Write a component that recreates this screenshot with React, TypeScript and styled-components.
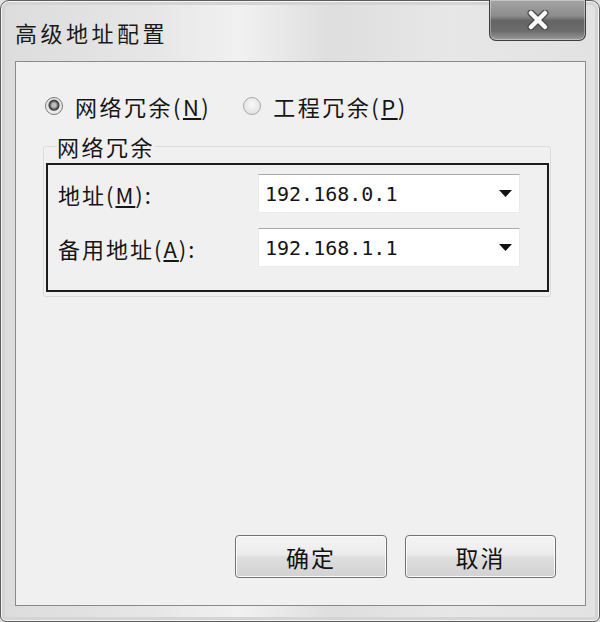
import React from "react";
import styled, { createGlobalStyle } from "styled-components";

const GlobalStyle = createGlobalStyle`
  html, body {
    margin: 0;
    padding: 0;
    background: #e2e2e2;
  }
  body {
    font-family: "Noto Sans CJK SC", "Noto Sans", sans-serif;
    color: #161616;
  }
`;

const Window = styled.div`
  box-sizing: border-box;
  width: 600px;
  height: 622px;
  display: flex;
  flex-direction: column;
  padding: 0 13px 15px 14px;
  border: 1px solid #5c5c5c;
  border-radius: 9px 9px 6px 6px;
  background: linear-gradient(
    90deg,
    #dcdcdc 0%,
    #e6e6e6 25%,
    #f1f1f1 40%,
    #dedede 55%,
    #e7e7e7 75%,
    #e2e2e2 100%
  );
  box-shadow: inset 0 0 0 1px #f6f6f6, inset 0 0 0 4px #d4d4d4;
`;

const TitleBar = styled.div`
  height: 60px;
  display: flex;
  align-items: flex-start;
  justify-content: space-between;
`;

const Title = styled.div`
  margin-top: 16px;
  font-size: 22px;
  line-height: 30px;
  letter-spacing: 3.5px;
  color: #1a1a1a;
`;

const CloseButton = styled.div`
  box-sizing: border-box;
  width: 97px;
  height: 41px;
  margin-top: -1px;
  display: flex;
  align-items: center;
  justify-content: center;
  border: 1px solid #3e3e3e;
  border-top: none;
  border-radius: 0 0 7px 7px;
  background: linear-gradient(
    180deg,
    #a4a4a4 0%,
    #8c8c8c 40%,
    #646464 52%,
    #6c6c6c 78%,
    #9c9c9c 100%
  );
  box-shadow: inset 0 0 0 1px rgba(255, 255, 255, 0.35);
`;

const Client = styled.div`
  flex: 1;
  display: flex;
  flex-direction: column;
  border: 1px solid #8a8a8a;
  background: #f0f0f0;
`;

const RadioRow = styled.div`
  height: 30px;
  margin: 29px 0 0 29px;
  display: flex;
  align-items: center;
`;

const RadioOption = styled.label`
  display: flex;
  align-items: center;
  gap: 12px;
  margin-right: 32px;
  font-size: 22px;
  line-height: 30px;
  letter-spacing: 2.5px;
`;

const RadioDot = styled.span<{ checked?: boolean }>`
  box-sizing: border-box;
  width: 18px;
  height: 18px;
  border-radius: 50%;
  border: 1px solid ${({ checked }) => (checked ? "#7a7a7a" : "#a8a8a8")};
  background: ${({ checked }) =>
    checked
      ? "radial-gradient(circle at 50% 45%, #bdbdbd 0 2px, #5a5a5a 4px, #3c3c3c 5px, #e6e6e6 6px, #f4f4f4 100%)"
      : "radial-gradient(circle at 50% 40%, #f8f8f8 0%, #e4e4e4 70%, #d6d6d6 100%)"};
`;

const Key = styled.u`
  text-underline-offset: 2px;
`;

const GroupBox = styled.fieldset`
  box-sizing: border-box;
  width: 508px;
  margin: 12px 0 0 27px;
  padding: 0 0 4px 2px;
  border: 1px solid #dadada;
  border-radius: 3px;
  min-inline-size: 0;
`;

const Legend = styled.legend`
  margin-left: 11px;
  padding: 0;
  font-size: 22px;
  line-height: 26px;
  letter-spacing: 2.5px;
`;

const Panel = styled.div`
  box-sizing: border-box;
  width: 503px;
  height: 129px;
  margin-top: 4px;
  padding: 9px 26px 0 10px;
  border: 2px solid #1c1c1c;
  display: grid;
  grid-template-columns: 200px 262px;
  align-content: start;
  row-gap: 15px;
  align-items: center;
`;

const FieldLabel = styled.div`
  font-size: 22px;
  line-height: 30px;
  letter-spacing: 2px;
`;

const Combo = styled.div`
  box-sizing: border-box;
  height: 39px;
  display: flex;
  align-items: center;
  justify-content: space-between;
  padding: 0 7px 0 6px;
  background: #ffffff;
  border: 1px solid #eaeaea;
  border-top-color: #a9a9a9;
`;

const ComboText = styled.span`
  font-family: "DejaVu Sans Mono", "Liberation Mono", monospace;
  font-size: 20px;
  color: #141414;
`;

const ButtonRow = styled.div`
  margin-top: auto;
  padding: 0 29px 27px 0;
  display: flex;
  justify-content: flex-end;
  gap: 18px;
`;

const Button = styled.button<{ w: number }>`
  box-sizing: border-box;
  width: ${({ w }) => w}px;
  height: 43px;
  padding: 0;
  border: 1px solid #727272;
  border-radius: 4px;
  background: linear-gradient(
    180deg,
    #f4f4f4 0%,
    #ececec 45%,
    #dedede 52%,
    #d2d2d2 100%
  );
  box-shadow: inset 0 0 0 1px #fbfbfb;
  font-family: "Noto Sans CJK SC", "Noto Sans", sans-serif;
  font-size: 23px;
  letter-spacing: 2px;
  color: #111;
`;

const CloseIcon = () => (
  <svg width="24" height="20" viewBox="0 0 24 20">
    <path d="M5 3 L19 17 M19 3 L5 17" stroke="#4a4a4a" strokeWidth="7" strokeLinecap="round" />
    <path d="M5 3 L19 17 M19 3 L5 17" stroke="#fafafa" strokeWidth="4.5" strokeLinecap="round" />
  </svg>
);

const DropArrow = () => (
  <svg width="13" height="7" viewBox="0 0 13 7">
    <path d="M0 0 H13 L6.5 7 Z" fill="#111" />
  </svg>
);

const fields = [
  { label: "地址", key: "M", value: "192.168.0.1" },
  { label: "备用地址", key: "A", value: "192.168.1.1" },
];

export default function App() {
  return (
    <>
      <GlobalStyle />
      <Window>
        <TitleBar>
          <Title>高级地址配置</Title>
          <CloseButton>
            <CloseIcon />
          </CloseButton>
        </TitleBar>
        <Client>
          <RadioRow>
            <RadioOption>
              <RadioDot checked />
              <span>
                网络冗余(<Key>N</Key>)
              </span>
            </RadioOption>
            <RadioOption>
              <RadioDot />
              <span>
                工程冗余(<Key>P</Key>)
              </span>
            </RadioOption>
          </RadioRow>
          <GroupBox>
            <Legend>网络冗余</Legend>
            <Panel>
              {fields.map((f) => (
                <React.Fragment key={f.key}>
                  <FieldLabel>
                    {f.label}(<Key>{f.key}</Key>):
                  </FieldLabel>
                  <Combo>
                    <ComboText>{f.value}</ComboText>
                    <DropArrow />
                  </Combo>
                </React.Fragment>
              ))}
            </Panel>
          </GroupBox>
          <ButtonRow>
            <Button w={152}>确定</Button>
            <Button w={151}>取消</Button>
          </ButtonRow>
        </Client>
      </Window>
    </>
  );
}
